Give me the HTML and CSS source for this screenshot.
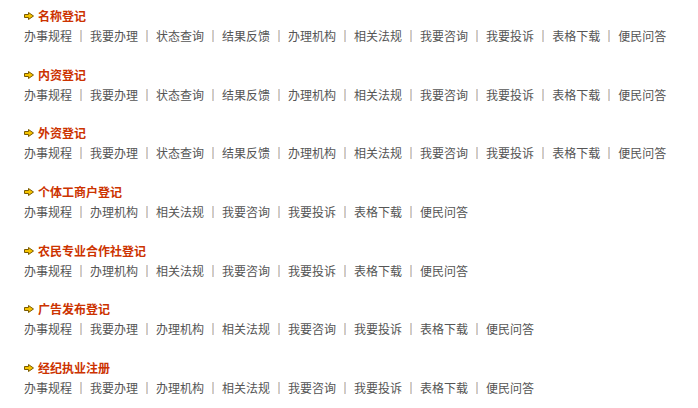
FILE: index.html
```html
<!DOCTYPE html>
<html lang="zh">
<head>
<meta charset="utf-8">
<link rel="stylesheet" href="styles.css">
</head>
<body>
<div class="list">
  <section class="group">
    <h3 class="title"><svg class="arrow" viewBox="0 0 10 8" width="10" height="8"><path d="M0.5 2.5H4.5V0.5L9.5 4L4.5 7.5V5.5H0.5Z" fill="#f5c400" stroke="#7a5a00" stroke-width="1"/></svg>名称登记</h3>
    <div class="links"><a>办事规程</a><i></i><a>我要办理</a><i></i><a>状态查询</a><i></i><a>结果反馈</a><i></i><a>办理机构</a><i></i><a>相关法规</a><i></i><a>我要咨询</a><i></i><a>我要投诉</a><i></i><a>表格下载</a><i></i><a>便民问答</a></div>
  </section>
  <section class="group">
    <h3 class="title"><svg class="arrow" viewBox="0 0 10 8" width="10" height="8"><path d="M0.5 2.5H4.5V0.5L9.5 4L4.5 7.5V5.5H0.5Z" fill="#f5c400" stroke="#7a5a00" stroke-width="1"/></svg>内资登记</h3>
    <div class="links"><a>办事规程</a><i></i><a>我要办理</a><i></i><a>状态查询</a><i></i><a>结果反馈</a><i></i><a>办理机构</a><i></i><a>相关法规</a><i></i><a>我要咨询</a><i></i><a>我要投诉</a><i></i><a>表格下载</a><i></i><a>便民问答</a></div>
  </section>
  <section class="group">
    <h3 class="title"><svg class="arrow" viewBox="0 0 10 8" width="10" height="8"><path d="M0.5 2.5H4.5V0.5L9.5 4L4.5 7.5V5.5H0.5Z" fill="#f5c400" stroke="#7a5a00" stroke-width="1"/></svg>外资登记</h3>
    <div class="links"><a>办事规程</a><i></i><a>我要办理</a><i></i><a>状态查询</a><i></i><a>结果反馈</a><i></i><a>办理机构</a><i></i><a>相关法规</a><i></i><a>我要咨询</a><i></i><a>我要投诉</a><i></i><a>表格下载</a><i></i><a>便民问答</a></div>
  </section>
  <section class="group">
    <h3 class="title"><svg class="arrow" viewBox="0 0 10 8" width="10" height="8"><path d="M0.5 2.5H4.5V0.5L9.5 4L4.5 7.5V5.5H0.5Z" fill="#f5c400" stroke="#7a5a00" stroke-width="1"/></svg>个体工商户登记</h3>
    <div class="links"><a>办事规程</a><i></i><a>办理机构</a><i></i><a>相关法规</a><i></i><a>我要咨询</a><i></i><a>我要投诉</a><i></i><a>表格下载</a><i></i><a>便民问答</a></div>
  </section>
  <section class="group">
    <h3 class="title"><svg class="arrow" viewBox="0 0 10 8" width="10" height="8"><path d="M0.5 2.5H4.5V0.5L9.5 4L4.5 7.5V5.5H0.5Z" fill="#f5c400" stroke="#7a5a00" stroke-width="1"/></svg>农民专业合作社登记</h3>
    <div class="links"><a>办事规程</a><i></i><a>办理机构</a><i></i><a>相关法规</a><i></i><a>我要咨询</a><i></i><a>我要投诉</a><i></i><a>表格下载</a><i></i><a>便民问答</a></div>
  </section>
  <section class="group">
    <h3 class="title"><svg class="arrow" viewBox="0 0 10 8" width="10" height="8"><path d="M0.5 2.5H4.5V0.5L9.5 4L4.5 7.5V5.5H0.5Z" fill="#f5c400" stroke="#7a5a00" stroke-width="1"/></svg>广告发布登记</h3>
    <div class="links"><a>办事规程</a><i></i><a>我要办理</a><i></i><a>办理机构</a><i></i><a>相关法规</a><i></i><a>我要咨询</a><i></i><a>我要投诉</a><i></i><a>表格下载</a><i></i><a>便民问答</a></div>
  </section>
  <section class="group">
    <h3 class="title"><svg class="arrow" viewBox="0 0 10 8" width="10" height="8"><path d="M0.5 2.5H4.5V0.5L9.5 4L4.5 7.5V5.5H0.5Z" fill="#f5c400" stroke="#7a5a00" stroke-width="1"/></svg>经纪执业注册</h3>
    <div class="links"><a>办事规程</a><i></i><a>我要办理</a><i></i><a>办理机构</a><i></i><a>相关法规</a><i></i><a>我要咨询</a><i></i><a>我要投诉</a><i></i><a>表格下载</a><i></i><a>便民问答</a></div>
  </section>
</div>
</body>
</html>
```
FILE: styles.css
```css
html, body {
  margin: 0;
  padding: 0;
  background: #ffffff;
}
body {
  font-family: "Noto Sans CJK SC", "Noto Sans", sans-serif;
  font-size: 12px;
}
.list {
  padding: 6px 0 0 24px;
  display: flex;
  flex-direction: column;
  gap: 18.67px;
}
.group {
  display: flex;
  flex-direction: column;
}
.title {
  margin: 0;
  height: 20px;
  line-height: 20px;
  font-size: 12px;
  font-weight: bold;
  color: #cc3300;
  display: flex;
  align-items: center;
}
.arrow {
  margin-right: 4px;
  flex: none;
}
.links {
  height: 20px;
  line-height: 20px;
  display: flex;
  align-items: center;
  color: #555555;
}
.links a {
  white-space: nowrap;
}
.links i {
  display: block;
  width: 2px;
  height: 12px;
  margin: 0 8px;
  background: linear-gradient(to right, #e0cdb4 50%, #c4cbe0 50%);
}
```
